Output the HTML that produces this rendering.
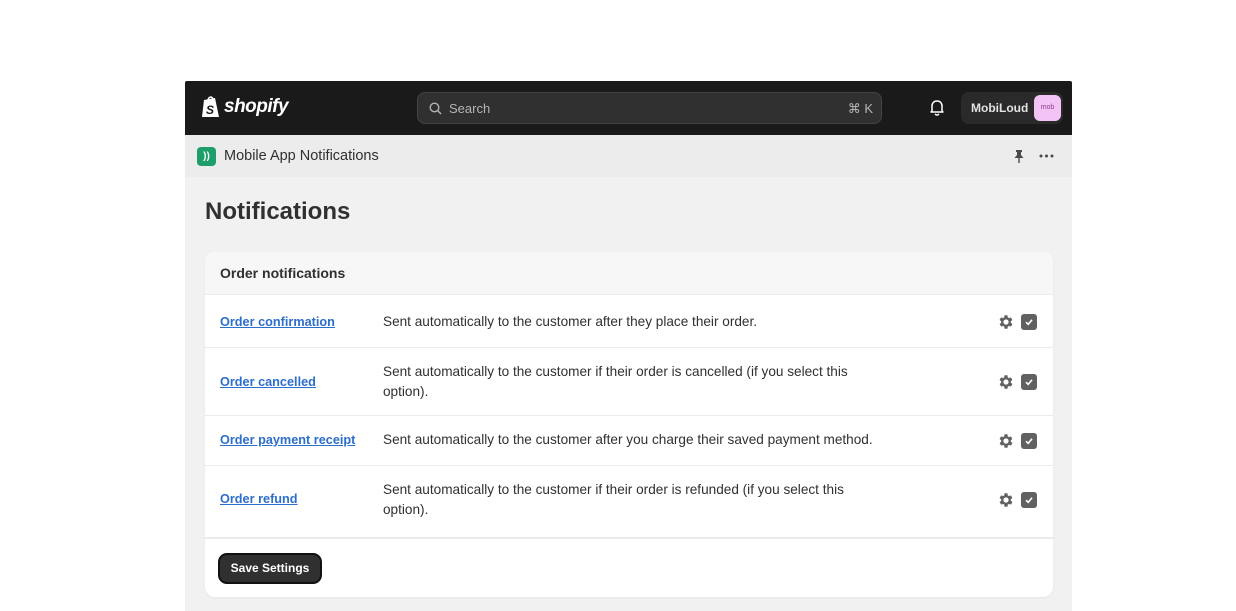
<!DOCTYPE html>
<html><head><style>
*{box-sizing:border-box;margin:0;padding:0}
body{width:1236px;height:611px;background:#fff;font-family:"Liberation Sans",sans-serif;position:relative;overflow:hidden;color:#303030}
.frame{position:absolute;left:185px;top:81px;width:887px;height:530px;background:#f1f1f1}
.top{position:absolute;left:0;top:0;width:887px;height:54px;background:#1a1a1a;border-radius:2px 2px 0 0}
.logo{position:absolute;left:15px;top:14px;display:flex;align-items:center;color:#fff;font-weight:bold;font-style:italic;font-size:19px;letter-spacing:-0.5px}
.search{position:absolute;left:232px;top:11px;width:465px;height:32px;background:#303030;border:1px solid #444;border-radius:8px;color:#b5b5b5;font-size:13px}
.search .t{position:absolute;left:31px;top:8px}
.search .k{position:absolute;right:8px;top:8px}
.bell{position:absolute;left:744px;top:18px}
.user{position:absolute;left:776px;top:11px;width:102px;height:32px;background:#2a2a2a;border-radius:8px;color:#e3e3e3;font-size:12px;font-weight:bold}
.user span{position:absolute;left:10px;top:9px}
.av{position:absolute;right:2px;top:3px;width:27px;height:26px;background:#f4c3f6;border-radius:6px;color:#8a3d8f;font-size:7px;text-align:center;line-height:26px;font-weight:normal}
.sub{position:absolute;left:0;top:54px;width:887px;height:42px;background:#ececec}
.appic{position:absolute;left:12px;top:12px;width:19px;height:19px;background:#1e9e6a;border-radius:4px;color:#fff;font-size:10px;font-weight:bold;text-align:center;line-height:19px}
.apptitle{position:absolute;left:39px;top:13px;font-size:14.5px;color:#303030}
h1{position:absolute;left:20px;top:117px;font-size:24px;font-weight:bold;color:#303030}
.card{position:absolute;left:20px;top:171px;width:848px;height:345px;background:#fff;border-radius:10px;overflow:hidden;box-shadow:0 1px 2px rgba(0,0,0,.05)}
.ch{height:42px;background:#f7f7f7;padding:13px 15px;font-weight:bold;font-size:14px}
.row{position:relative;border-top:1px solid #ebebeb;font-size:13.6px}
.row a{position:absolute;left:15px;color:#2c6ecb;font-weight:bold;text-decoration:underline;font-size:12.7px}
.row .d{position:absolute;left:178px;width:478px;line-height:19.5px;color:#303030}
.ic{position:absolute;left:792px;display:flex;gap:6px;align-items:center}
.cb{width:16px;height:16px;background:#616161;border-radius:3px;display:flex;align-items:center;justify-content:center}
.foot{position:absolute;left:0;top:285px;width:848px;height:60px;border-top:2px solid #ebebeb}
.btn{position:absolute;left:13px;top:14px;width:104px;height:31px;background:#303030;border:2px solid #111;border-radius:9px;color:#fff;font-size:12px;font-weight:bold;text-align:center;line-height:27px}
</style></head><body>
<div class="frame">
 <div class="top">
  <div class="logo"><svg width="22" height="24" viewBox="0 0 22 24"><path d="M4 5 L15 3 L19 22 L2 22 Z" fill="#fff"/><path d="M8 6 C8 1 13 1 13 5" stroke="#fff" stroke-width="1.6" fill="none"/><text x="6" y="19" font-size="12" font-weight="bold" fill="#1a1a1a" font-family="Liberation Sans">S</text></svg><span style="margin-left:2px">shopify</span></div>
  <div class="search"><svg style="position:absolute;left:11px;top:9px" width="13" height="13" viewBox="0 0 13 13"><circle cx="5.5" cy="5.5" r="4.3" stroke="#b5b5b5" stroke-width="1.4" fill="none"/><path d="M8.8 8.8 L12 12" stroke="#b5b5b5" stroke-width="1.4"/></svg><span class="t">Search</span><span class="k">⌘ K</span></div>
  <svg class="bell" width="16" height="17" viewBox="0 0 16 17"><path d="M3 12 L3 7 C3 4 5 2 8 2 C11 2 13 4 13 7 L13 12 L14 13 L2 13 Z" stroke="#fff" stroke-width="1.5" fill="none" stroke-linejoin="round"/><path d="M6 15 Q8 17 10 15" stroke="#fff" stroke-width="1.5" fill="none"/></svg>
  <div class="user"><span>MobiLoud</span><div class="av">mob</div></div>
 </div>
 <div class="sub">
  <div class="appic">))</div>
  <div class="apptitle">Mobile App Notifications</div>
  <svg style="position:absolute;left:828px;top:14px" width="12" height="14" viewBox="0 0 12 14"><path d="M3 1 H9 V3 H8 V6 L10.5 9 H1.5 L4 6 V3 H3 Z" fill="#4a4a4a"/><rect x="5.3" y="9" width="1.4" height="5" fill="#4a4a4a"/></svg>
  <svg style="position:absolute;left:854px;top:19px" width="15" height="4"><circle cx="2" cy="2" r="1.5" fill="#4a4a4a"/><circle cx="7.5" cy="2" r="1.5" fill="#4a4a4a"/><circle cx="13" cy="2" r="1.5" fill="#4a4a4a"/></svg>
 </div>
 <h1>Notifications</h1>
 <div class="card">
  <div class="ch">Order notifications</div>
  <div class="row" style="height:53px"><a style="top:20px">Order confirmation</a><div class="d" style="top:17px">Sent automatically to the customer after they place their order.</div><div class="ic" style="top:18px">GEAR CB</div></div>
  <div class="row" style="height:68px"><a style="top:27px">Order cancelled</a><div class="d" style="top:14px">Sent automatically to the customer if their order is cancelled (if you select this option).</div><div class="ic" style="top:25px">GEAR CB</div></div>
  <div class="row" style="height:50px"><a style="top:17px">Order payment receipt</a><div class="d" style="top:14px;width:520px">Sent automatically to the customer after you charge their saved payment method.</div><div class="ic" style="top:16px">GEAR CB</div></div>
  <div class="row" style="height:72px"><a style="top:26px">Order refund</a><div class="d" style="top:14px">Sent automatically to the customer if their order is refunded (if you select this option).</div><div class="ic" style="top:25px">GEAR CB</div></div>
  <div class="foot"><div class="btn">Save Settings</div></div>
 </div>
</div>
<script>
var g='<svg width="18" height="18" viewBox="0 0 24 24"><path fill="#616161" d="M19.4 13a7.5 7.5 0 0 0 0-2l2.1-1.6-2-3.5-2.5 1a7 7 0 0 0-1.7-1L15 3h-4l-.4 2.9a7 7 0 0 0-1.7 1l-2.5-1-2 3.5L6.6 11a7.5 7.5 0 0 0 0 2l-2.1 1.6 2 3.5 2.5-1a7 7 0 0 0 1.7 1L11 21h4l.4-2.9a7 7 0 0 0 1.7-1l2.5 1 2-3.5zM13 15.5a3.5 3.5 0 1 1 0-7 3.5 3.5 0 0 1 0 7z" transform="translate(-1 0)"/></svg>';
var c='<div class="cb"><svg width="10" height="10" viewBox="0 0 10 10"><path d="M2 5.2 L4.2 7.3 L8 2.8" stroke="#fff" stroke-width="1.6" fill="none"/></svg></div>';
document.querySelectorAll('.ic').forEach(function(e){e.innerHTML=g+c;});
</script>
</body></html>
